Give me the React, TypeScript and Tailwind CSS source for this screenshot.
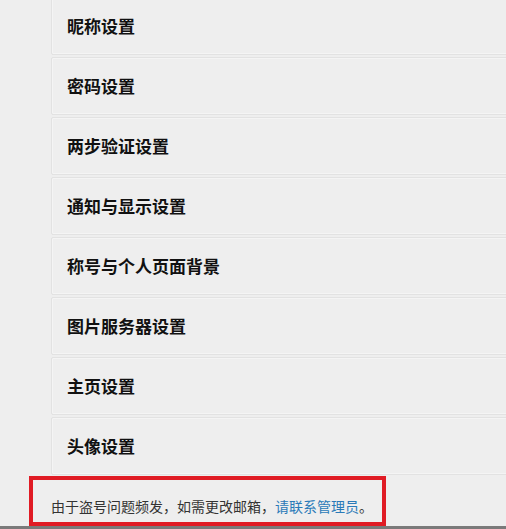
import React from 'react';

const settings = [
  '昵称设置',
  '密码设置',
  '两步验证设置',
  '通知与显示设置',
  '称号与个人页面背景',
  '图片服务器设置',
  '主页设置',
  '头像设置',
];

const App: React.FC = () => {
  return (
    <div
      className="w-[506px] h-[529px] overflow-hidden bg-[#eeeeee] flex flex-col"
      style={{ fontFamily: '"Noto Sans CJK SC", "Noto Sans", sans-serif' }}
    >
      <ul className="mt-[-3px] ml-[51px] flex flex-col gap-[2px]">
        {settings.map((name) => (
          <li
            key={name}
            className="h-[58px] w-[520px] flex items-center pl-[15px] bg-[#eeeeee] border border-[#e2e2e2] rounded-[2px] shadow-[inset_0_0_0_1px_#f4f4f4]"
          >
            <span className="text-[17px] font-bold text-[#111] leading-none mt-[-2px]">{name}</span>
          </li>
        ))}
      </ul>

      <div className="mt-[1px] ml-[29px] w-[357px] h-[50px] border-[4px] border-[#e01b24] flex items-center pl-[18px] pt-[9px]">
        <p className="text-[14px] text-[#333] leading-none whitespace-nowrap">
          由于盗号问题频发，如需更改邮箱，
          <a href="#" className="text-[#2a7ab8]">请联系管理员</a>。
        </p>
      </div>

      <div className="flex-1 bg-[#7a7a7a]" />
    </div>
  );
};

export default App;
